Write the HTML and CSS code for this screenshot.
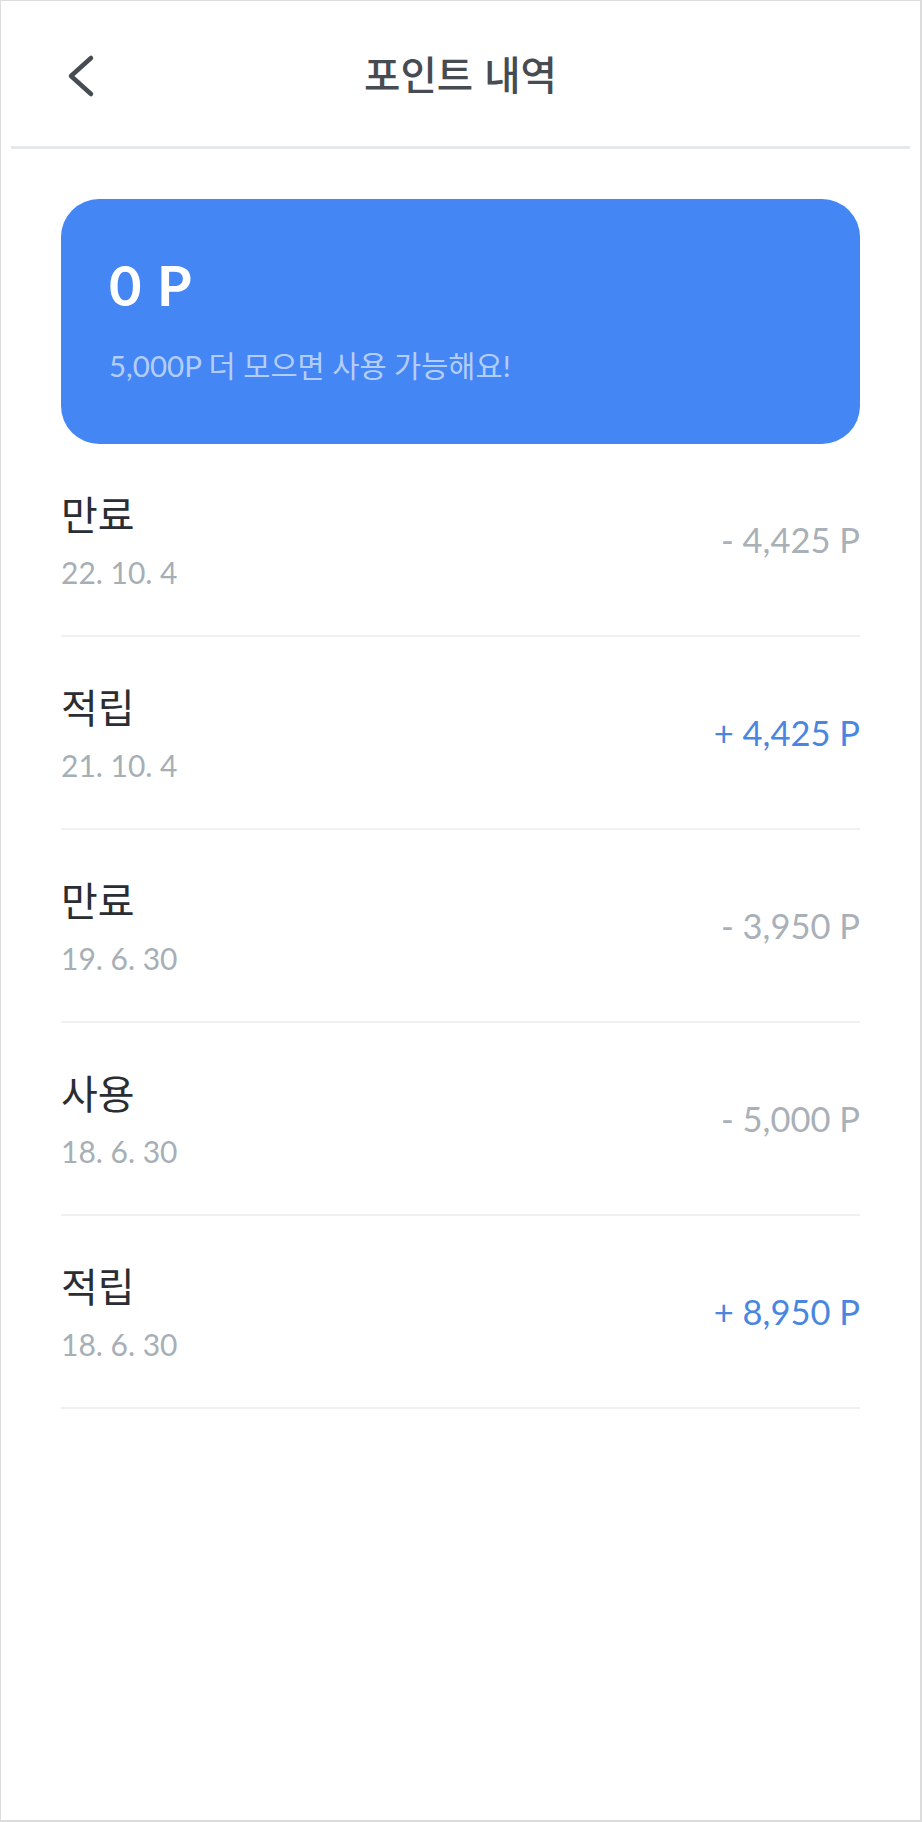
FILE: index.html
```html
<!DOCTYPE html>
<html lang="ko">
<head>
<meta charset="utf-8">
<title>포인트 내역</title>
<link rel="stylesheet" href="styles.css">
</head>
<body>
<div class="screen">
  <header class="header">
    <div class="header-side">
      <button class="back" aria-label="뒤로">
        <svg width="30" height="44" viewBox="0 0 30 44" fill="none">
          <path d="M25 4 L5 22 L25 40" stroke="#464c52" stroke-width="4.5" stroke-linecap="round" stroke-linejoin="round"/>
        </svg>
      </button>
    </div>
    <h1 class="title">포인트 내역</h1>
    <div class="header-side"></div>
  </header>

  <section class="card">
    <div class="card-points">0 P</div>
    <div class="card-desc">5,000P 더 모으면 사용 가능해요!</div>
  </section>

  <ul class="list">
    <li class="row">
      <div class="row-info">
        <div class="row-title">만료</div>
        <div class="row-date">22. 10. 4</div>
      </div>
      <div class="row-amount minus">- 4,425 P</div>
    </li>
    <li class="row">
      <div class="row-info">
        <div class="row-title">적립</div>
        <div class="row-date">21. 10. 4</div>
      </div>
      <div class="row-amount plus">+ 4,425 P</div>
    </li>
    <li class="row">
      <div class="row-info">
        <div class="row-title">만료</div>
        <div class="row-date">19. 6. 30</div>
      </div>
      <div class="row-amount minus">- 3,950 P</div>
    </li>
    <li class="row">
      <div class="row-info">
        <div class="row-title">사용</div>
        <div class="row-date">18. 6. 30</div>
      </div>
      <div class="row-amount minus">- 5,000 P</div>
    </li>
    <li class="row">
      <div class="row-info">
        <div class="row-title">적립</div>
        <div class="row-date">18. 6. 30</div>
      </div>
      <div class="row-amount plus">+ 8,950 P</div>
    </li>
  </ul>
</div>
</body>
</html>
```

FILE: styles.css
```css
* {
  box-sizing: border-box;
}

html, body {
  margin: 0;
  padding: 0;
  background: #ffffff;
}

.screen {
  width: 922px;
  height: 1822px;
  border: 1px solid #dcdcdc;
  border-right-width: 2px;
  border-bottom-width: 2px;
  background: #ffffff;
  font-family: Lato, "Noto Sans CJK KR", sans-serif;
}

.header {
  margin: 0 10px;
  height: 148px;
  border-bottom: 3px solid #e6e9ec;
  display: grid;
  grid-template-columns: 1fr auto 1fr;
  align-items: center;
  padding-bottom: 2px;
}

.header-side {
  display: flex;
  align-items: center;
}

.back {
  margin-left: 55px;
  margin-top: 7px;
  padding: 0;
  border: 0;
  background: none;
  width: 30px;
  height: 44px;
  display: flex;
}

.title {
  margin: 0;
  font-family: "Noto Sans CJK KR", sans-serif;
  font-size: 39.5px;
  font-weight: 500;
  color: #464c52;
  line-height: 1;
}

.card {
  margin: 50px 60px 0;
  height: 245px;
  border-radius: 38px;
  background: #4486f4;
  padding: 58px 48px 0;
}

.card-points {
  font-family: Lato, sans-serif;
  font-weight: 700;
  font-size: 56px;
  line-height: 56px;
  color: #ffffff;
  letter-spacing: 1px;
}

.card-desc {
  margin-top: 38px;
  font-family: Lato, "Noto Sans CJK KR", sans-serif;
  font-size: 29.5px;
  line-height: 30px;
  color: rgba(255, 255, 255, 0.62);
}

.list {
  list-style: none;
  margin: 0 60px;
  padding: 0;
}

.row {
  height: 193px;
  border-bottom: 2px solid #eef0f2;
  display: flex;
  align-items: center;
  justify-content: space-between;
}

.row-info {
  display: flex;
  flex-direction: column;
  gap: 24px;
}

.row-title {
  font-family: "Noto Sans CJK KR", sans-serif;
  font-size: 40px;
  line-height: 40px;
  color: #2a2e33;
}

.row-date {
  font-family: Lato, sans-serif;
  font-size: 30px;
  line-height: 30px;
  color: #a7afb6;
}

.row-amount {
  font-family: Lato, sans-serif;
  font-size: 34.5px;
  line-height: 35px;
}

.row-amount.minus {
  color: #a9b0b7;
}

.row-amount.plus {
  color: #4a86e0;
}
```
